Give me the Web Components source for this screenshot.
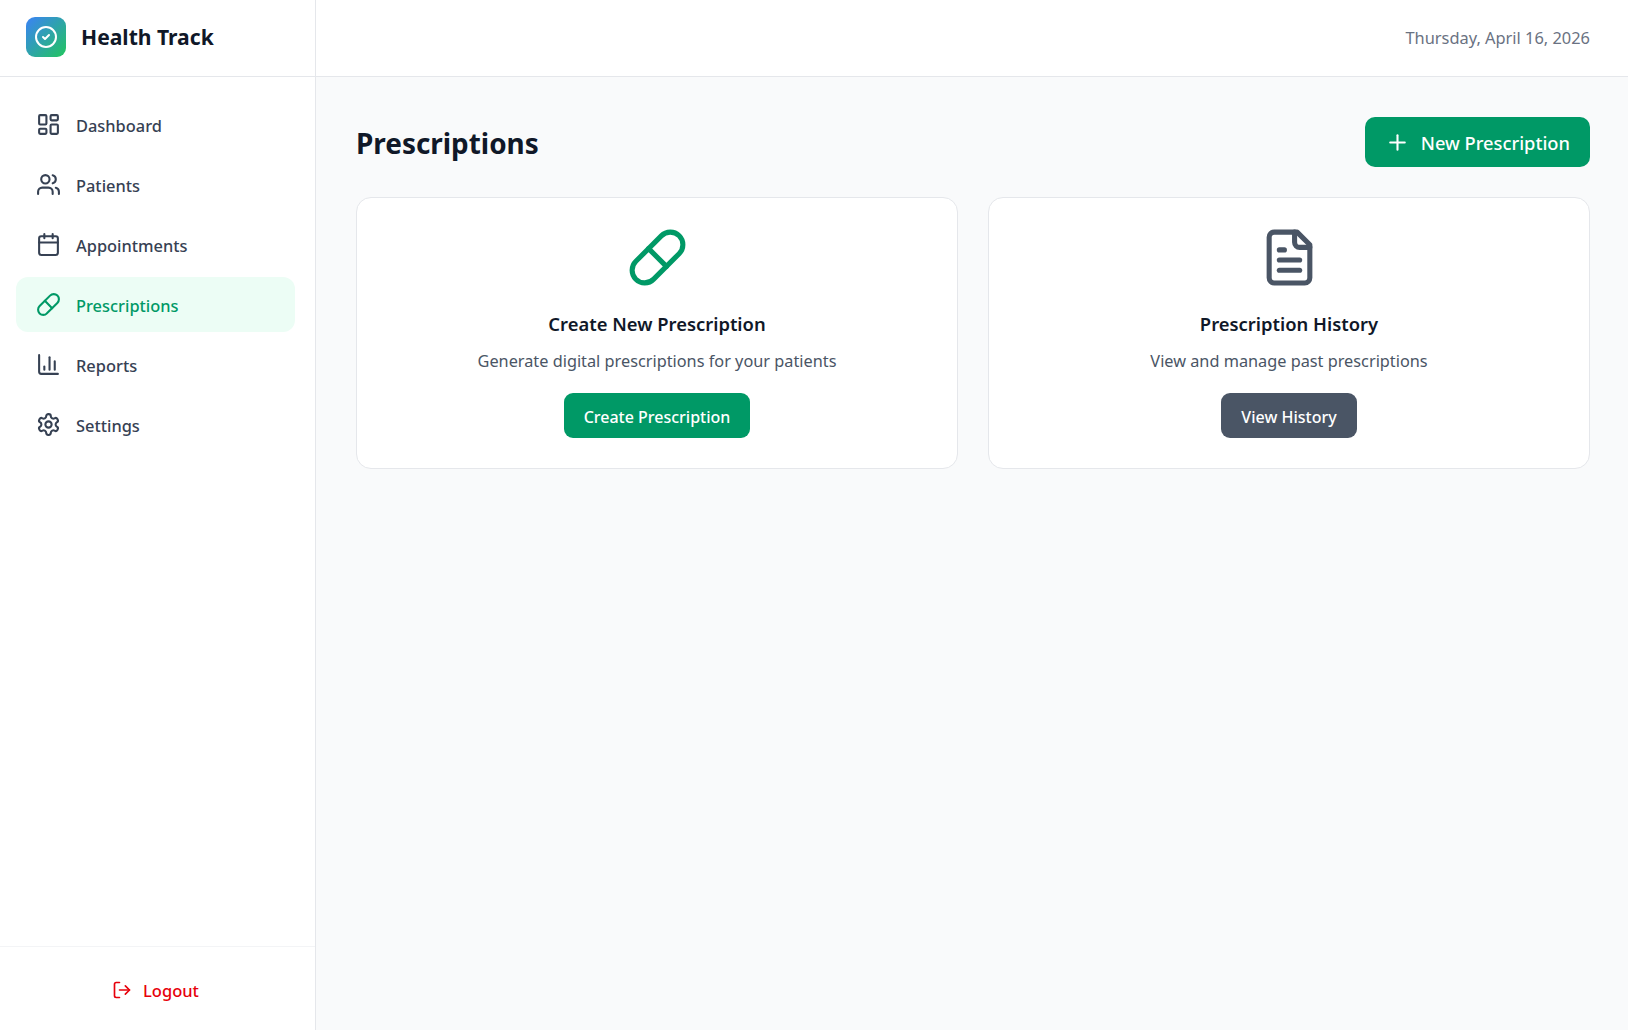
<!DOCTYPE html>
<html lang="en">
<head>
<meta charset="utf-8">
<title>Health Track</title>
<style>
  html, body { margin: 0; height: 100%; }
  body { background: #f9fafb; font-family: "Noto Sans", sans-serif; }
</style>
</head>
<body>
<health-app>
  <health-sidebar slot="sidebar">
    <nav-item icon="dashboard">Dashboard</nav-item>
    <nav-item icon="users">Patients</nav-item>
    <nav-item icon="calendar">Appointments</nav-item>
    <nav-item icon="pill" active>Prescriptions</nav-item>
    <nav-item icon="chart">Reports</nav-item>
    <nav-item icon="settings">Settings</nav-item>
  </health-sidebar>
  <top-bar slot="topbar">Thursday, April 16, 2026</top-bar>
  <page-head title="Prescriptions">
    <action-button size="large" icon="plus">New Prescription</action-button>
  </page-head>
  <card-grid>
    <action-card icon="pill" heading="Create New Prescription" text="Generate digital prescriptions for your patients" tone="#009966">
      <action-button>Create Prescription</action-button>
    </action-card>
    <action-card icon="file" heading="Prescription History" text="View and manage past prescriptions" tone="#4a5565">
      <action-button color="#4a5565">View History</action-button>
    </action-card>
  </card-grid>
</health-app>

<script>
// stroke icons, all on a 24 grid
const ICONS = {
  dashboard: '<rect width="7" height="9" x="3" y="3" rx="1"/><rect width="7" height="5" x="14" y="3" rx="1"/><rect width="7" height="9" x="14" y="12" rx="1"/><rect width="7" height="5" x="3" y="16" rx="1"/>',
  users: '<path d="M16 21v-2a4 4 0 0 0-4-4H6a4 4 0 0 0-4 4v2"/><circle cx="9" cy="7" r="4"/><path d="M22 21v-2a4 4 0 0 0-3-3.87"/><path d="M16 3.13a4 4 0 0 1 0 7.75"/>',
  calendar: '<path d="M8 2v4"/><path d="M16 2v4"/><rect width="18" height="18" x="3" y="4" rx="2"/><path d="M3 10h18"/>',
  pill: '<path d="m10.5 20.5 10-10a4.95 4.95 0 1 0-7-7l-10 10a4.95 4.95 0 1 0 7 7Z"/><path d="m8.5 8.5 7 7"/>',
  chart: '<path d="M3 3v16a2 2 0 0 0 2 2h16"/><path d="M18 17V9"/><path d="M13 17V5"/><path d="M8 17v-3"/>',
  settings: '<path d="M12.22 2h-.44a2 2 0 0 0-2 2v.18a2 2 0 0 1-1 1.73l-.43.25a2 2 0 0 1-2 0l-.15-.08a2 2 0 0 0-2.73.73l-.22.38a2 2 0 0 0 .73 2.73l.15.1a2 2 0 0 1 1 1.72v.51a2 2 0 0 1-1 1.74l-.15.09a2 2 0 0 0-.73 2.73l.22.38a2 2 0 0 0 2.73.73l.15-.08a2 2 0 0 1 2 0l.43.25a2 2 0 0 1 1 1.73V20a2 2 0 0 0 2 2h.44a2 2 0 0 0 2-2v-.18a2 2 0 0 1 1-1.73l.43-.25a2 2 0 0 1 2 0l.15.08a2 2 0 0 0 2.73-.73l.22-.39a2 2 0 0 0-.73-2.73l-.15-.08a2 2 0 0 1-1-1.74v-.5a2 2 0 0 1 1-1.74l.15-.09a2 2 0 0 0 .73-2.73l-.22-.38a2 2 0 0 0-2.73-.73l-.15.08a2 2 0 0 1-2 0l-.43-.25a2 2 0 0 1-1-1.73V4a2 2 0 0 0-2-2z"/><circle cx="12" cy="12" r="3"/>',
  logout: '<path d="M9 21H5a2 2 0 0 1-2-2V5a2 2 0 0 1 2-2h4"/><path d="m16 17 5-5-5-5"/><path d="M21 12H9"/>',
  plus: '<path d="M5 12h14"/><path d="M12 5v14"/>',
  check: '<circle cx="12" cy="12" r="10"/><path d="m9 12 2 2 4-4"/>',
  file: '<path d="M15 2H6a2 2 0 0 0-2 2v16a2 2 0 0 0 2 2h12a2 2 0 0 0 2-2V7Z"/><path d="M14 2v4a2 2 0 0 0 2 2h4"/><path d="M10 9H8"/><path d="M16 13H8"/><path d="M16 17H8"/>'
};

function iconSvg(name, size, stroke = 2) {
  return `<svg width="${size}" height="${size}" viewBox="0 0 24 24" fill="none" stroke="currentColor" stroke-width="${stroke}" stroke-linecap="round" stroke-linejoin="round" aria-hidden="true">${ICONS[name]}</svg>`;
}

class HealthApp extends HTMLElement {
  constructor() {
    super();
    this.attachShadow({ mode: 'open' }).innerHTML = `
      <style>
        :host { display: grid; grid-template-columns: 316px 1fr; grid-template-rows: 77px 1fr; height: 100vh; }
        .side { grid-row: 1 / 3; display: flex; min-height: 0; }
        main { padding: 40px 38px 40px 40px; }
      </style>
      <div class="side"><slot name="sidebar"></slot></div>
      <slot name="topbar"></slot>
      <main><slot></slot></main>
    `;
  }
}

class HealthSidebar extends HTMLElement {
  constructor() {
    super();
    this.attachShadow({ mode: 'open' }).innerHTML = `
      <style>
        :host { display: flex; flex-direction: column; flex: 1; background: #fff; border-right: 1px solid #e5e7eb; }
        .brand { display: flex; align-items: center; gap: 15px; height: 74px; padding: 0 0 2px 26px; border-bottom: 1px solid #e5e7eb; }
        .logo { display: flex; align-items: center; justify-content: center; width: 40px; height: 40px; border-radius: 9px; color: #fff; background: linear-gradient(135deg, #3b82f6, #22c55e); }
        .name { font-size: 21.1px; font-weight: 700; line-height: 28px; color: #101828; }
        nav { flex: 1; display: flex; flex-direction: column; gap: 5px; padding: 20px 20px 0 16px; }
        .foot { height: 84px; box-sizing: border-box; padding: 17px 20px 0 16px; border-top: 1px solid #f3f4f6; }
        .logout { display: flex; align-items: center; justify-content: center; gap: 11px; height: 52px; color: #e7000b; font-size: 16.5px; font-weight: 500; }
      </style>
      <div class="brand">
        <span class="logo">${iconSvg('check', 24)}</span>
        <span class="name">Health Track</span>
      </div>
      <nav><slot></slot></nav>
      <div class="foot"><div class="logout">${iconSvg('logout', 20)}<span>Logout</span></div></div>
    `;
  }
}

class NavItem extends HTMLElement {
  constructor() {
    super();
    this.attachShadow({ mode: 'open' });
  }

  connectedCallback() {
    this.shadowRoot.innerHTML = `
      <style>
        :host { display: flex; align-items: center; gap: 15px; height: 55px; padding-left: 20px; border-radius: 12px; color: #364153; font-size: 16.4px; font-weight: 500; }
        :host([active]) { background: #ecfdf5; color: #009966; }
        svg { flex: none; }
        .label { padding-top: 2px; }
      </style>
      ${iconSvg(this.getAttribute('icon'), 25)}<span class="label"><slot></slot></span>
    `;
  }
}

class TopBar extends HTMLElement {
  constructor() {
    super();
    this.attachShadow({ mode: 'open' }).innerHTML = `
      <style>
        :host { display: flex; align-items: center; justify-content: flex-end; height: 74px; padding: 0 38px 2px 0; background: #fff; border-bottom: 1px solid #e5e7eb; color: #6a7282; font-size: 16.4px; }
      </style>
      <slot></slot>
    `;
  }
}

class PageHead extends HTMLElement {
  constructor() {
    super();
    this.attachShadow({ mode: 'open' });
  }

  connectedCallback() {
    this.shadowRoot.innerHTML = `
      <style>
        :host { display: flex; align-items: center; justify-content: space-between; margin-bottom: 30px; }
        h1 { margin: 0; padding-top: 2px; font-size: 27.9px; font-weight: 700; line-height: 36px; color: #101828; }
      </style>
      <h1>${this.getAttribute('title')}</h1>
      <slot></slot>
    `;
  }
}

class ActionButton extends HTMLElement {
  constructor() {
    super();
    this.attachShadow({ mode: 'open' });
  }

  connectedCallback() {
    const large = this.getAttribute('size') === 'large';
    const icon = this.getAttribute('icon');
    this.shadowRoot.innerHTML = `
      <style>
        :host { display: inline-flex; align-items: center; gap: 11px; height: ${large ? 50 : 45}px; padding: 0 20px; box-sizing: border-box;
          border-radius: ${large ? 10 : 9}px; background: ${this.getAttribute('color') || '#009966'}; color: #fff;
          font-size: ${large ? 18.3 : 16}px; font-weight: 500; }
        .label { padding-top: ${large ? 0 : 2}px; }
      </style>
      ${icon ? iconSvg(icon, 25) : ''}<span class="label"><slot></slot></span>
    `;
  }
}

class CardGrid extends HTMLElement {
  constructor() {
    super();
    this.attachShadow({ mode: 'open' }).innerHTML = `
      <style>
        :host { display: grid; grid-template-columns: 1fr 1fr; gap: 30px; }
      </style>
      <slot></slot>
    `;
  }
}

class ActionCard extends HTMLElement {
  constructor() {
    super();
    this.attachShadow({ mode: 'open' });
  }

  connectedCallback() {
    this.shadowRoot.innerHTML = `
      <style>
        :host { display: flex; flex-direction: column; align-items: center; padding: 29px 30px 30px; background: #fff; border: 1px solid #e5e7eb; border-radius: 15px; text-align: center; }
        svg { flex: none; color: ${this.getAttribute('tone')}; margin-bottom: 22px; }
        h2 { margin: 0 0 10px; font-size: 18.4px; font-weight: 600; line-height: 28px; color: #101828; }
        p { margin: 0 0 19px; font-size: 16.3px; line-height: 26px; color: #4a5565; }
      </style>
      ${iconSvg(this.getAttribute('icon'), 61)}
      <h2>${this.getAttribute('heading')}</h2>
      <p>${this.getAttribute('text')}</p>
      <slot></slot>
    `;
  }
}

customElements.define('health-app', HealthApp);
customElements.define('health-sidebar', HealthSidebar);
customElements.define('nav-item', NavItem);
customElements.define('top-bar', TopBar);
customElements.define('page-head', PageHead);
customElements.define('action-button', ActionButton);
customElements.define('card-grid', CardGrid);
customElements.define('action-card', ActionCard);
</script>
</body>
</html>
